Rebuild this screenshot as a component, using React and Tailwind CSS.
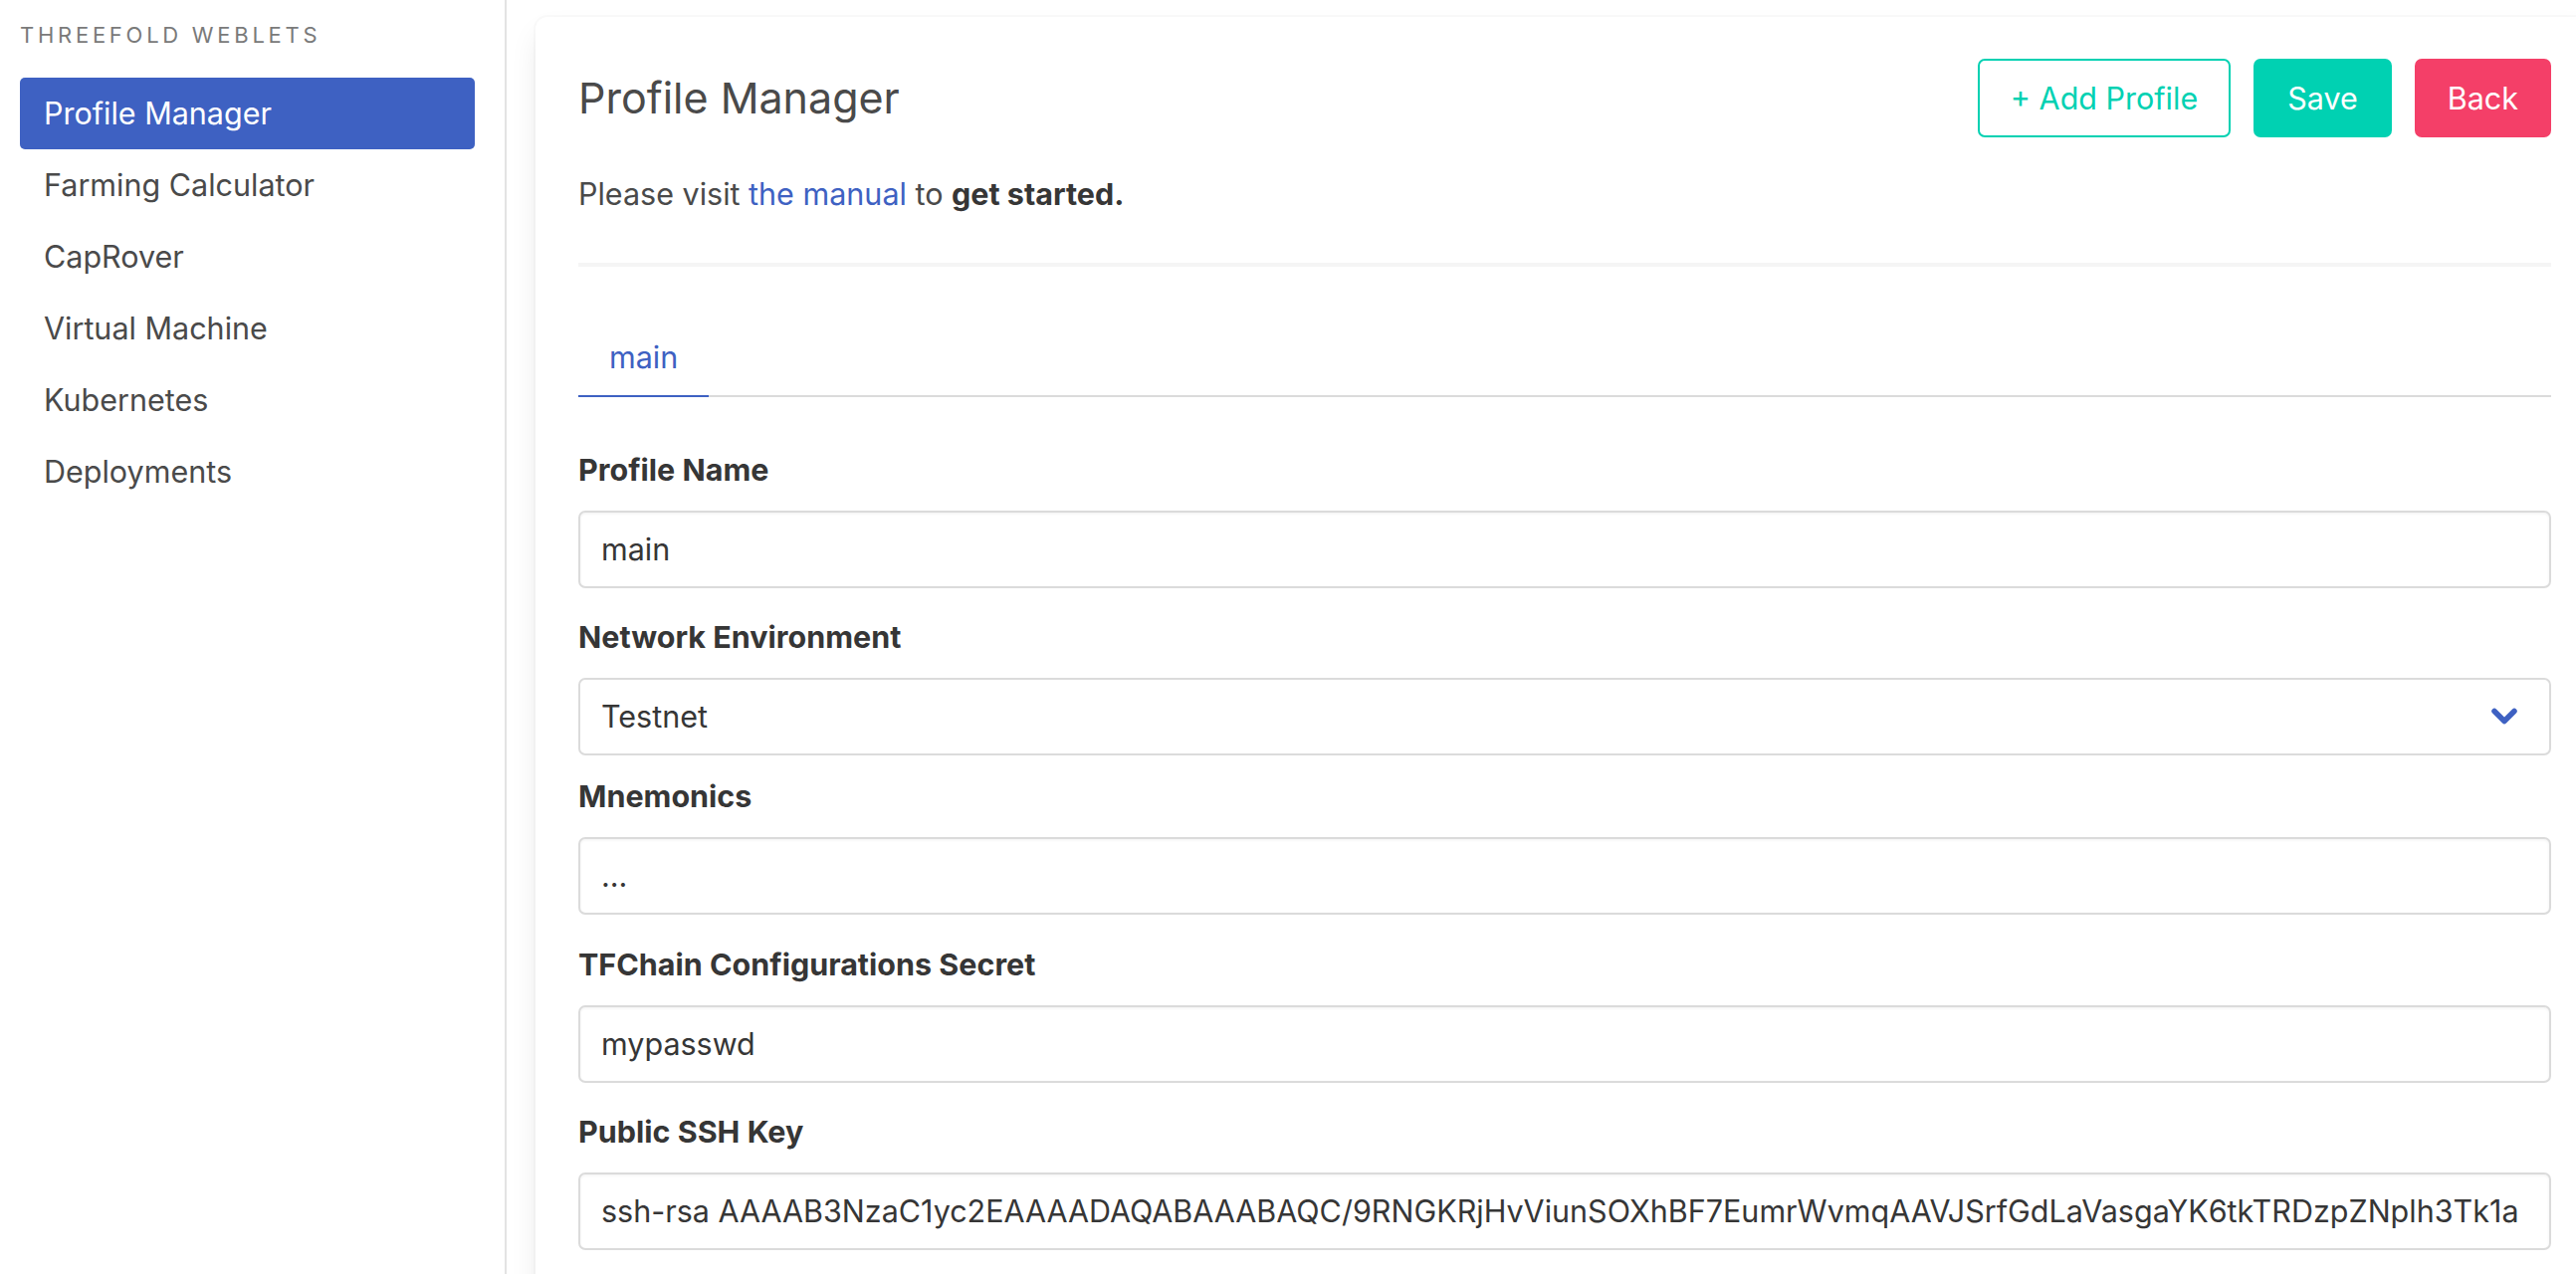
import React from "react";

const navItems = [
  "Profile Manager",
  "Farming Calculator",
  "CapRover",
  "Virtual Machine",
  "Kubernetes",
  "Deployments",
];

function Field({ label, children, gap }) {
  return (
    <div className={gap}>
      <label className="block h-[44px] text-[30.5px] font-bold leading-[44px] text-[#363636]">
        {label}
      </label>
      <div className="mt-[19px]">{children}</div>
    </div>
  );
}

function TextBox({ value }) {
  return (
    <div className="flex h-[78px] items-center overflow-hidden whitespace-nowrap rounded-[7px] border-2 border-[#dbdbdb] bg-white px-[21px] text-[30.5px] text-[#363636] shadow-[inset_0_1px_3px_rgba(10,10,10,0.06)]">
      {value}
    </div>
  );
}

export default function App() {
  return (
    <div className="flex h-[1280px] w-[2588px] overflow-hidden bg-white font-[Inter,'Noto_Sans',sans-serif] text-[#4a4a4a]">
      <aside className="w-[509px] shrink-0 border-r-2 border-[#e3e3e3] pl-[20px] pr-[30px] pt-[22px]">
        <p className="text-[22px] uppercase leading-[26px] tracking-[0.17em] text-[#7a7a7a]">
          Threefold Weblets
        </p>
        <ul className="mt-[30px]">
          {navItems.map((item, i) => (
            <li
              key={item}
              className={
                i === 0
                  ? "flex h-[72px] items-center rounded-[5px] bg-[#3e61c2] px-[24px] text-[30.5px] text-white"
                  : "flex h-[72px] items-center rounded-[5px] px-[24px] text-[30.5px] text-[#4a4a4a]"
              }
            >
              {item}
            </li>
          ))}
        </ul>
      </aside>

      <main className="flex-1 pl-[29px] pt-[17px]">
        <div className="w-[2068px] shrink-0 rounded-[12px] bg-white px-[43px] pt-[42px] pb-[60px] shadow-[0_15px_30px_-4px_rgba(10,10,10,0.1),0_0_0_2px_rgba(10,10,10,0.02)]">
          <div className="flex h-[79px] items-center justify-between">
            <h1 className="text-[43px] font-normal text-[#4a4a4a]">Profile Manager</h1>
            <div className="flex items-center gap-[23px]">
              <button className="h-[79px] rounded-[7px] border-2 border-[#00d1b2] bg-white px-[31px] text-[30.5px] text-[#00d1b2]">
                + Add Profile
              </button>
              <button className="h-[79px] rounded-[7px] bg-[#00d1b2] px-[34px] text-[30.5px] text-white">
                Save
              </button>
              <button className="h-[79px] rounded-[7px] bg-[#f43f68] px-[33px] text-[30.5px] text-white">
                Back
              </button>
            </div>
          </div>

          <p className="mt-[35px] text-[30.5px] leading-[44px] text-[#4a4a4a]">
            Please visit <span className="text-[#3e61c2]">the manual</span> to{" "}
            <strong className="font-bold text-[#363636]">get started.</strong>
          </p>

          <div className="mt-[47px] h-[4px] bg-[#f5f5f5]" />

          <div className="mt-[54px] flex border-b-2 border-[#dbdbdb]">
            <div className="-mb-[2px] border-b-2 border-[#3e61c2] px-[31px] pt-[15px] pb-[16px] text-[30.5px] leading-[44px] text-[#3e61c2]">
              main
            </div>
          </div>

          <div className="mt-[51px]">
            <Field label="Profile Name">
              <TextBox value="main" />
            </Field>
            <Field label="Network Environment" gap="mt-[27px]">
              <div className="relative flex h-[78px] items-center rounded-[7px] border-2 border-[#dbdbdb] bg-white px-[21px] text-[30.5px] text-[#363636]">
                Testnet
                <svg
                  className="absolute right-[31px] top-1/2 -translate-y-1/2"
                  width="28"
                  height="19"
                  viewBox="0 0 28 19"
                  fill="none"
                >
                  <polyline
                    points="4,4 14,14 24,4"
                    stroke="#3e61c2"
                    strokeWidth="5.5"
                    strokeLinecap="round"
                    strokeLinejoin="round"
                  />
                </svg>
              </div>
            </Field>
            <Field label="Mnemonics" gap="mt-[19px]">
              <TextBox value="..." />
            </Field>
            <Field label="TFChain Configurations Secret" gap="mt-[28px]">
              <TextBox value="mypasswd" />
            </Field>
            <Field label="Public SSH Key" gap="mt-[27px]">
              <TextBox value="ssh-rsa AAAAB3NzaC1yc2EAAAADAQABAAABAQC/9RNGKRjHvViunSOXhBF7EumrWvmqAAVJSrfGdLaVasgaYK6tkTRDzpZNplh3Tk1a" />
            </Field>
          </div>
        </div>
      </main>
    </div>
  );
}
